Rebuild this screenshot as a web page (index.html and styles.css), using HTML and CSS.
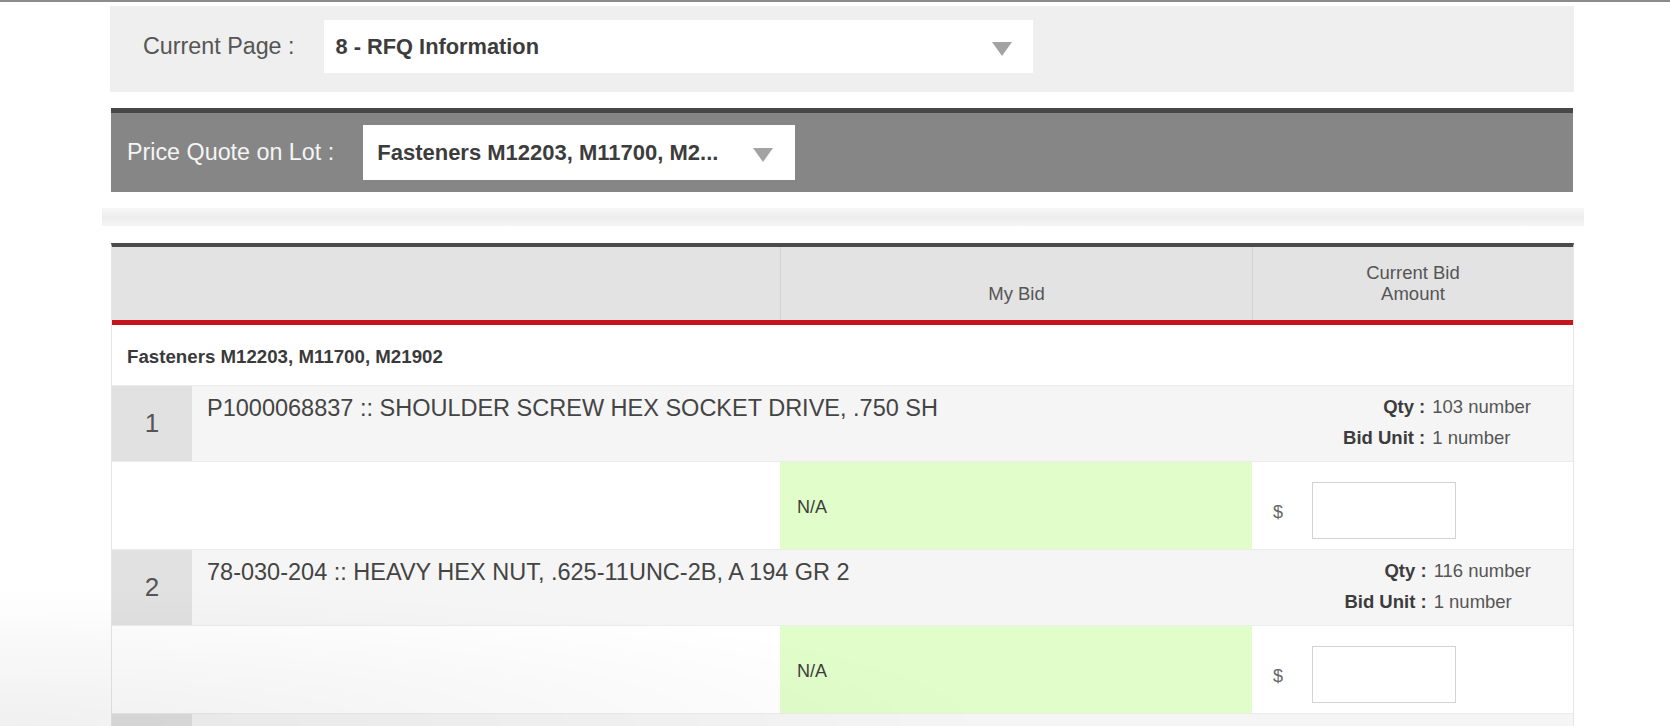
FILE: index.html
```html
<!DOCTYPE html>
<html>
<head>
<meta charset="utf-8">
<link rel="stylesheet" href="styles.css">
</head>
<body>
<div class="topline"></div>
<div class="page">
  <div class="panel-current">
    <span class="pc-label">Current Page :</span>
    <div class="select select-page">
      <span class="select-text">8 - RFQ Information</span>
      <span class="caret"></span>
    </div>
  </div>

  <div class="panel-lot">
    <span class="lot-label">Price Quote on Lot :</span>
    <div class="select select-lot">
      <span class="select-text">Fasteners M12203, M11700, M2...</span>
      <span class="caret"></span>
    </div>
  </div>

  <div class="strip"></div>

  <div class="table">
    <div class="thead">
      <div class="th th-first"></div>
      <div class="th">My Bid</div>
      <div class="th">Current Bid<br>Amount</div>
    </div>

    <div class="group-row">Fasteners M12203, M11700, M21902</div>

    <div class="item-row">
      <div class="num">1</div>
      <div class="desc">P1000068837 :: SHOULDER SCREW HEX SOCKET DRIVE, .750 SH</div>
      <div class="meta">
        <b>Qty :</b><span>103 number</span>
        <b>Bid Unit :</b><span>1 number</span>
      </div>
    </div>
    <div class="bid-row">
      <div class="bid-blank"></div>
      <div class="bid-mine">N/A</div>
      <div class="bid-amount"><span class="dollar">$</span><span class="amount-input"></span></div>
    </div>

    <div class="item-row">
      <div class="num">2</div>
      <div class="desc">78-030-204 :: HEAVY HEX NUT, .625-11UNC-2B, A 194 GR 2</div>
      <div class="meta">
        <b>Qty :</b><span>116 number</span>
        <b>Bid Unit :</b><span>1 number</span>
      </div>
    </div>
    <div class="bid-row">
      <div class="bid-blank"></div>
      <div class="bid-mine">N/A</div>
      <div class="bid-amount"><span class="dollar">$</span><span class="amount-input"></span></div>
    </div>

    <div class="item-row">
      <div class="num">3</div>
      <div class="desc">78-030-205 :: HEAVY HEX NUT, .750-10UNC-2B, A 194 GR 2</div>
      <div class="meta">
        <b>Qty :</b><span>105 number</span>
        <b>Bid Unit :</b><span>1 number</span>
      </div>
    </div>
  </div>
</div>
<div class="fade"></div>
</body>
</html>
```

FILE: styles.css
```css
html, body {
  margin: 0;
  padding: 0;
  background: #ffffff;
  font-family: "Liberation Sans", Arial, sans-serif;
  color: #444;
  overflow: hidden;
  height: 726px;
}

.topline {
  height: 2px;
  background: #8c8c8c;
}

.page {
  width: 1464px;
  margin-left: 110px;
}

.panel-current {
  margin-top: 4px;
  height: 86px;
  background: #efefef;
  display: flex;
  align-items: center;
  padding-left: 33px;
  box-sizing: border-box;
}

.pc-label {
  font-size: 23.3px;
  color: #555;
  margin-right: 29px;
  margin-top: -5px;
}

.select {
  background: #fff;
  display: flex;
  align-items: center;
  justify-content: space-between;
  box-sizing: border-box;
}

.select-text {
  font-weight: bold;
  font-size: 21.8px;
  color: #3c3c3c;
}

.select-page {
  width: 709px;
  height: 53px;
  padding: 0 21px 0 12px;
  margin-top: -5px;
}

.caret {
  width: 0;
  height: 0;
  border-left: 10px solid transparent;
  border-right: 10px solid transparent;
  border-top: 14px solid #a3a3a3;
  margin-top: 4px;
}

.panel-lot {
  margin-top: 16px;
  margin-left: 1px;
  width: 1462px;
  height: 84px;
  background: #868686;
  border-top: 5px solid #474747;
  display: flex;
  align-items: center;
  padding-left: 16px;
  box-sizing: border-box;
}

.lot-label {
  font-size: 23.3px;
  color: #f5f5f5;
  margin-right: 29px;
}

.select-lot {
  width: 432px;
  height: 55px;
  padding: 0 22px 0 14px;
}

.select-lot .select-text {
  font-size: 22px;
}

.strip {
  margin-top: 16px;
  margin-left: -8px;
  width: 1482px;
  height: 18px;
  background: linear-gradient(to bottom, #f7f7f7, #ededed 50%, #f4f4f4);
}

.table {
  margin-top: 17px;
  margin-left: 1px;
  width: 1463px;
  border-top: 4px solid #4b4b4b;
  border-left: 1px solid #e6e6e6;
  border-right: 1px solid #e6e6e6;
  box-sizing: border-box;
}

.thead {
  display: grid;
  grid-template-columns: 668px 472px 1fr;
  height: 73px;
  background: #e3e3e3;
  border-bottom: 5px solid #c8141c;
}

.th {
  display: flex;
  align-items: flex-end;
  justify-content: center;
  text-align: center;
  font-size: 18.5px;
  line-height: 21px;
  color: #555;
  padding-bottom: 16px;
  border-left: 1px solid #d2d2d2;
}

.th-first {
  border-left: none;
}

.group-row {
  height: 61px;
  display: flex;
  align-items: center;
  padding-left: 15px;
  padding-top: 3px;
  font-weight: bold;
  font-size: 18.7px;
  color: #3a3a3a;
  border-bottom: 1px solid #ececec;
  box-sizing: border-box;
}

.item-row {
  height: 76px;
  display: flex;
  background: #f5f5f5;
  border-bottom: 1px solid #ececec;
  box-sizing: border-box;
}

.num {
  width: 80px;
  flex: none;
  background: #e1e1e1;
  display: flex;
  align-items: center;
  justify-content: center;
  font-size: 26px;
  color: #555;
}

.desc {
  flex: 1;
  padding-left: 15px;
  padding-top: 9px;
  font-size: 23.5px;
  color: #444;
}

.meta {
  padding-right: 42px;
  padding-top: 5px;
  display: grid;
  grid-template-columns: auto auto;
  column-gap: 7px;
  align-content: start;
  font-size: 18.5px;
  line-height: 31px;
  color: #555;
}

.meta b {
  color: #3c3c3c;
  text-align: right;
}

.bid-row {
  display: grid;
  grid-template-columns: 668px 472px 1fr;
  height: 88px;
  border-bottom: 1px solid #ececec;
  box-sizing: border-box;
}

.bid-blank {
  background: #fff;
}

.bid-mine {
  background: #e1fdc9;
  display: flex;
  align-items: center;
  padding-left: 17px;
  padding-top: 4px;
  font-size: 18px;
  color: #3d3d3d;
}

.bid-amount {
  background: #fff;
  display: flex;
  align-items: center;
  padding-left: 21px;
}

.dollar {
  font-size: 18px;
  color: #666;
  margin-top: 14px;
  margin-right: 29px;
}

.amount-input {
  display: block;
  width: 144px;
  height: 57px;
  margin-top: 9px;
  border: 1px solid #d3d3d3;
  box-sizing: border-box;
  background: #fff;
}

.fade {
  position: fixed;
  left: 0;
  right: 0;
  bottom: 0;
  height: 140px;
  background: radial-gradient(ellipse 60% 100% at 0% 100%, rgba(0,0,0,0.06), rgba(0,0,0,0) 100%);
  pointer-events: none;
}
```
